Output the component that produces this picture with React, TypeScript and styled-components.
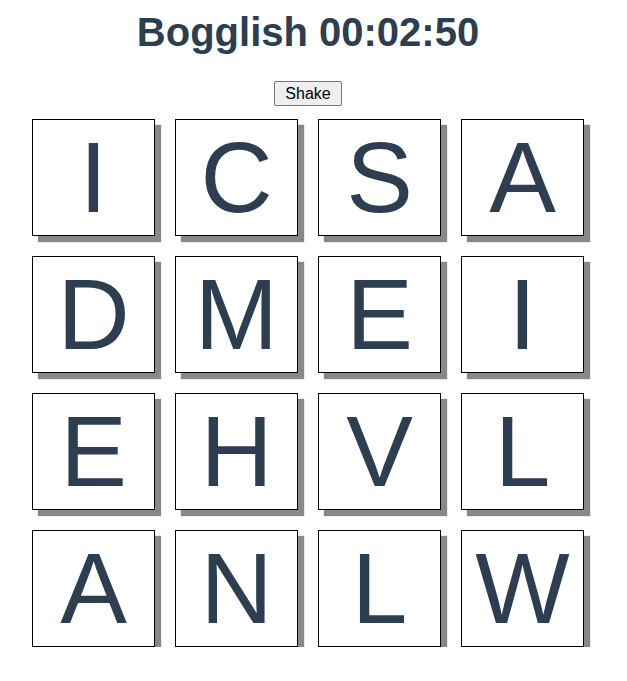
import React from "react";
import styled, { createGlobalStyle } from "styled-components";

const Global = createGlobalStyle`
  html, body { margin: 0; padding: 0; background: #fff; }
  body { font-family: "Liberation Sans", Arial, Helvetica, sans-serif; color: #2c3e50; }
`;

const Page = styled.div`
  width: 600px;
  margin-left: 8px;
  padding-top: 9px;
  display: flex;
  flex-direction: column;
  align-items: center;
  text-align: center;
`;

const Title = styled.h1`
  margin: 0;
  font-size: 40px;
  font-weight: bold;
  line-height: 46px;
  color: #2c3e50;
`;

const ShakeButton = styled.button`
  margin-top: 26px;
  height: 25px;
  padding: 0 10px;
  font-family: "Liberation Sans", Arial, sans-serif;
  font-size: 16px;
  line-height: 23px;
  color: #000;
  background: #efefef;
  border: 1px solid #767676;
  border-radius: 2px;
`;

const Board = styled.div`
  margin-top: 13px;
  display: grid;
  grid-template-columns: repeat(4, 123px);
  column-gap: 20px;
  row-gap: 20px;
`;

const Tile = styled.div`
  box-sizing: border-box;
  width: 123px;
  height: 117px;
  border: 1px solid #000;
  background: #fff;
  box-shadow: 6px 6px 1px #888;
  font-size: 100px;
  line-height: 115px;
  color: #2c3e50;
  text-align: center;
  overflow: hidden;
`;

const letters = "ICSADMEIEHVLANLW".split("");

export default function App() {
  return (
    <>
      <Global />
      <Page>
        <Title>Bogglish 00:02:50</Title>
        <ShakeButton>Shake</ShakeButton>
        <Board>
          {letters.map((l, i) => (
            <Tile key={i}>{l}</Tile>
          ))}
        </Board>
      </Page>
    </>
  );
}
